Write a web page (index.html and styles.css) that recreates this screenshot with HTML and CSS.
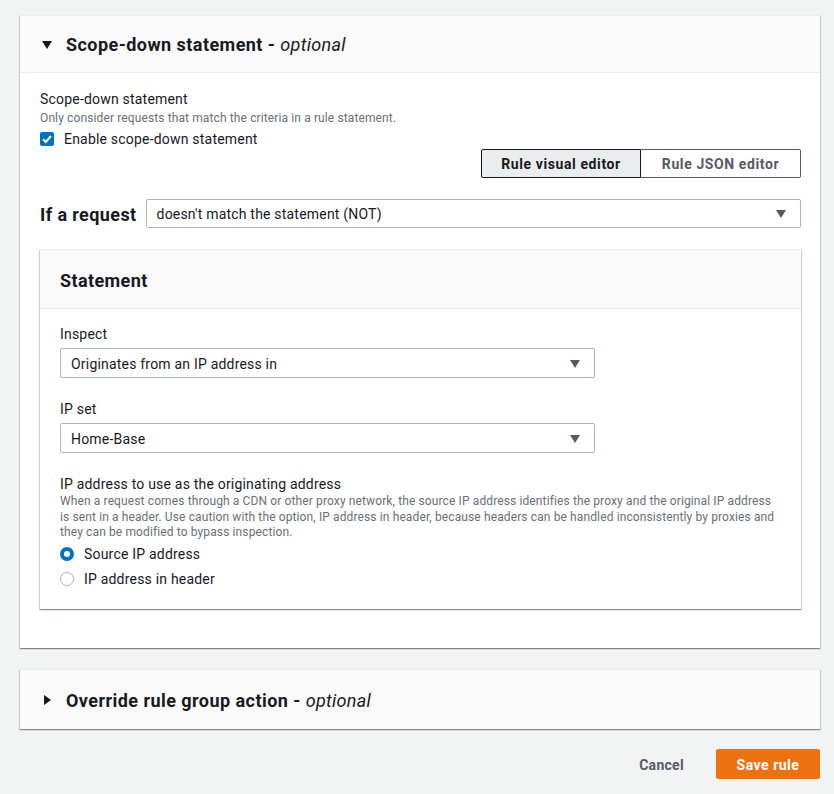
FILE: index.html
```html
<!DOCTYPE html>
<html lang="en">
<head>
<meta charset="utf-8">
<title>Scope-down statement</title>
<link rel="stylesheet" href="styles.css">
</head>
<body>
<div class="page">
  <section class="card">
    <header class="card-head">
      <span class="caret-down"></span>
      <h2 class="card-title">Scope-down statement - <em>optional</em></h2>
    </header>
    <div class="card-body">
      <div class="label">Scope-down statement</div>
      <div class="desc">Only consider requests that match the criteria in a rule statement.</div>
      <label class="check-row">
        <span class="checkbox">
          <svg width="14" height="14" viewBox="0 0 14 14"><path d="M3 7.2 L5.8 10 L11 4" fill="none" stroke="#fff" stroke-width="2"/></svg>
        </span>
        <span>Enable scope-down statement</span>
      </label>
      <div class="seg-row">
        <div class="seg">
          <span class="seg-btn seg-on">Rule visual editor</span>
          <span class="seg-btn seg-off">Rule JSON editor</span>
        </div>
      </div>
      <div class="if-row">
        <span class="if-label">If a request</span>
        <div class="select select-wide">
          <span>doesn't match the statement (NOT)</span>
          <span class="tri"></span>
        </div>
      </div>
      <div class="stmt">
        <div class="stmt-head">Statement</div>
        <div class="stmt-body">
          <div class="field">
            <div class="label">Inspect</div>
            <div class="select select-mid">
              <span>Originates from an IP address in</span>
              <span class="tri"></span>
            </div>
          </div>
          <div class="field">
            <div class="label">IP set</div>
            <div class="select select-mid">
              <span>Home-Base</span>
              <span class="tri"></span>
            </div>
          </div>
          <div class="field">
            <div class="label">IP address to use as the originating address</div>
            <div class="desc desc-long">When a request comes through a CDN or other proxy network, the source IP address identifies the proxy and the original IP address<br>is sent in a header. Use caution with the option, IP address in header, because headers can be handled inconsistently by proxies and<br>they can be modified to bypass inspection.</div>
            <div class="radios">
              <label class="radio-row"><span class="radio radio-on"></span><span>Source IP address</span></label>
              <label class="radio-row"><span class="radio"></span><span>IP address in header</span></label>
            </div>
          </div>
        </div>
      </div>
    </div>
  </section>

  <section class="card card-collapsed">
    <header class="card-head card-head-only">
      <span class="caret-right"></span>
      <h2 class="card-title">Override rule group action - <em>optional</em></h2>
    </header>
  </section>

  <div class="actions">
    <span class="btn-link">Cancel</span>
    <span class="btn-primary">Save rule</span>
  </div>
</div>
</body>
</html>
```
FILE: styles.css
```css
* { box-sizing: border-box; }
html, body { margin: 0; padding: 0; }
body {
  background: #f2f3f3;
  font-family: Roboto, "Liberation Sans", Arial, sans-serif;
  color: #16191f;
  font-size: 14px;
  line-height: 22px;
  letter-spacing: 0.2px;
}
.page {
  padding: 15px 14px 0 20px;
}
.card {
  background: #fff;
  border-top: 1px solid #eaeded;
  box-shadow: 0 1px 1px 0 rgba(0, 28, 36, 0.3), 1px 1px 1px 0 rgba(0, 28, 36, 0.15), -1px 1px 1px 0 rgba(0, 28, 36, 0.15);
}
.card-head {
  height: 57px;
  background: #fafafa;
  border-bottom: 1px solid #eaeded;
  display: flex;
  align-items: center;
  padding: 0 20px 0 22px;
}
.card-head-only { border-bottom: none; height: 59px; }
.card-title {
  margin: 0 0 0 14px;
  padding-top: 2px;
  font-size: 18px;
  font-weight: 700;
  line-height: 24px;
  letter-spacing: 0.45px;
}
.card-title em { font-weight: 400; font-style: italic; letter-spacing: 0.3px; }
.caret-down {
  width: 0; height: 0;
  border-left: 5px solid transparent;
  border-right: 5px solid transparent;
  border-top: 8px solid #16191f;
  margin-top: 1px;
}
.caret-right {
  width: 0; height: 0;
  border-top: 5px solid transparent;
  border-bottom: 5px solid transparent;
  border-left: 7px solid #16191f;
  margin-left: 2px;
  margin-right: 1px;
}
.card-body {
  padding: 15px 19px 39px 20px;
}
.label { font-size: 14px; line-height: 22px; }
.desc { font-size: 12px; line-height: 16px; color: #687078; letter-spacing: 0.12px; }
.desc-long { line-height: 15.7px; }
.check-row {
  display: flex;
  align-items: center;
  gap: 10px;
  margin-top: 2px;
}
.checkbox {
  width: 14px; height: 14px;
  background: #0073bb;
  border-radius: 2px;
  display: flex;
}
.seg-row {
  display: flex;
  justify-content: flex-end;
  margin-top: -1px;
}
.seg { display: flex; }
.seg-btn {
  width: 160px;
  height: 29px;
  display: flex;
  align-items: center;
  justify-content: center;
  font-weight: 700;
  font-size: 14px;
  letter-spacing: 0.6px;
  padding-top: 1px;
  border: 1px solid #545b64;
}
.seg-on {
  background: #eaeded;
  border-color: #16191f;
  color: #16191f;
  border-radius: 2px 0 0 2px;
}
.seg-off {
  background: #fff;
  color: #545b64;
  border-left: none;
  border-radius: 0 2px 2px 0;
}
.if-row {
  display: flex;
  align-items: center;
  gap: 9px;
  margin-top: 21px;
}
.if-label {
  font-size: 18px;
  font-weight: 700;
  line-height: 24px;
  letter-spacing: 0.4px;
  padding-top: 2px;
}
.select {
  height: 29px;
  border: 1px solid #aab7b8;
  border-radius: 2px;
  background: #fff;
  display: flex;
  align-items: center;
  justify-content: space-between;
  padding: 1px 14px 0 10px;
  font-size: 14px;
}
.select-wide { flex: 1; }
.select-mid { width: 535px; height: 30px; }
.tri {
  width: 0; height: 0;
  border-left: 5px solid transparent;
  border-right: 5px solid transparent;
  border-top: 8px solid #545b64;
}
.stmt {
  margin-top: 21px;
  border-top: 1px solid #eaeded;
  box-shadow: 0 1px 1px 0 rgba(0, 28, 36, 0.3), 1px 1px 1px 0 rgba(0, 28, 36, 0.15), -1px 1px 1px 0 rgba(0, 28, 36, 0.15);
  background: #fff;
}
.stmt-head {
  height: 59px;
  background: #fafafa;
  border-bottom: 1px solid #eaeded;
  display: flex;
  align-items: center;
  padding: 3px 20px 0;
  font-size: 18px;
  font-weight: 700;
  letter-spacing: 0.4px;
}
.stmt-body {
  padding: 14px 20px 19px;
  display: flex;
  flex-direction: column;
  gap: 20px;
}
.field .label { margin-bottom: 3px; }
.field .desc { margin-top: -4px; }
.radios {
  display: flex;
  flex-direction: column;
  gap: 3px;
  margin-top: 2px;
}
.radio-row {
  display: flex;
  align-items: center;
  gap: 10px;
}
.radio {
  width: 14px; height: 14px;
  border-radius: 50%;
  border: 1px solid #aab7b8;
  background: #fff;
}
.radio-on { border: 4px solid #0073bb; }
.card-collapsed { margin-top: 21px; background: #fafafa; }
.actions {
  display: flex;
  justify-content: flex-end;
  align-items: center;
  margin-top: 20px;
  gap: 12px;
}
.btn-link {
  font-weight: 700;
  color: #545b64;
  letter-spacing: 0.3px;
  padding: 2px 20px 0;
  height: 30px;
  display: flex;
  align-items: center;
}
.btn-primary {
  background: #ec7211;
  color: #fff;
  font-weight: 700;
  letter-spacing: 0.5px;
  height: 30px;
  width: 104px;
  padding-top: 2px;
  border-radius: 2px;
  display: flex;
  align-items: center;
  justify-content: center;
}
```
